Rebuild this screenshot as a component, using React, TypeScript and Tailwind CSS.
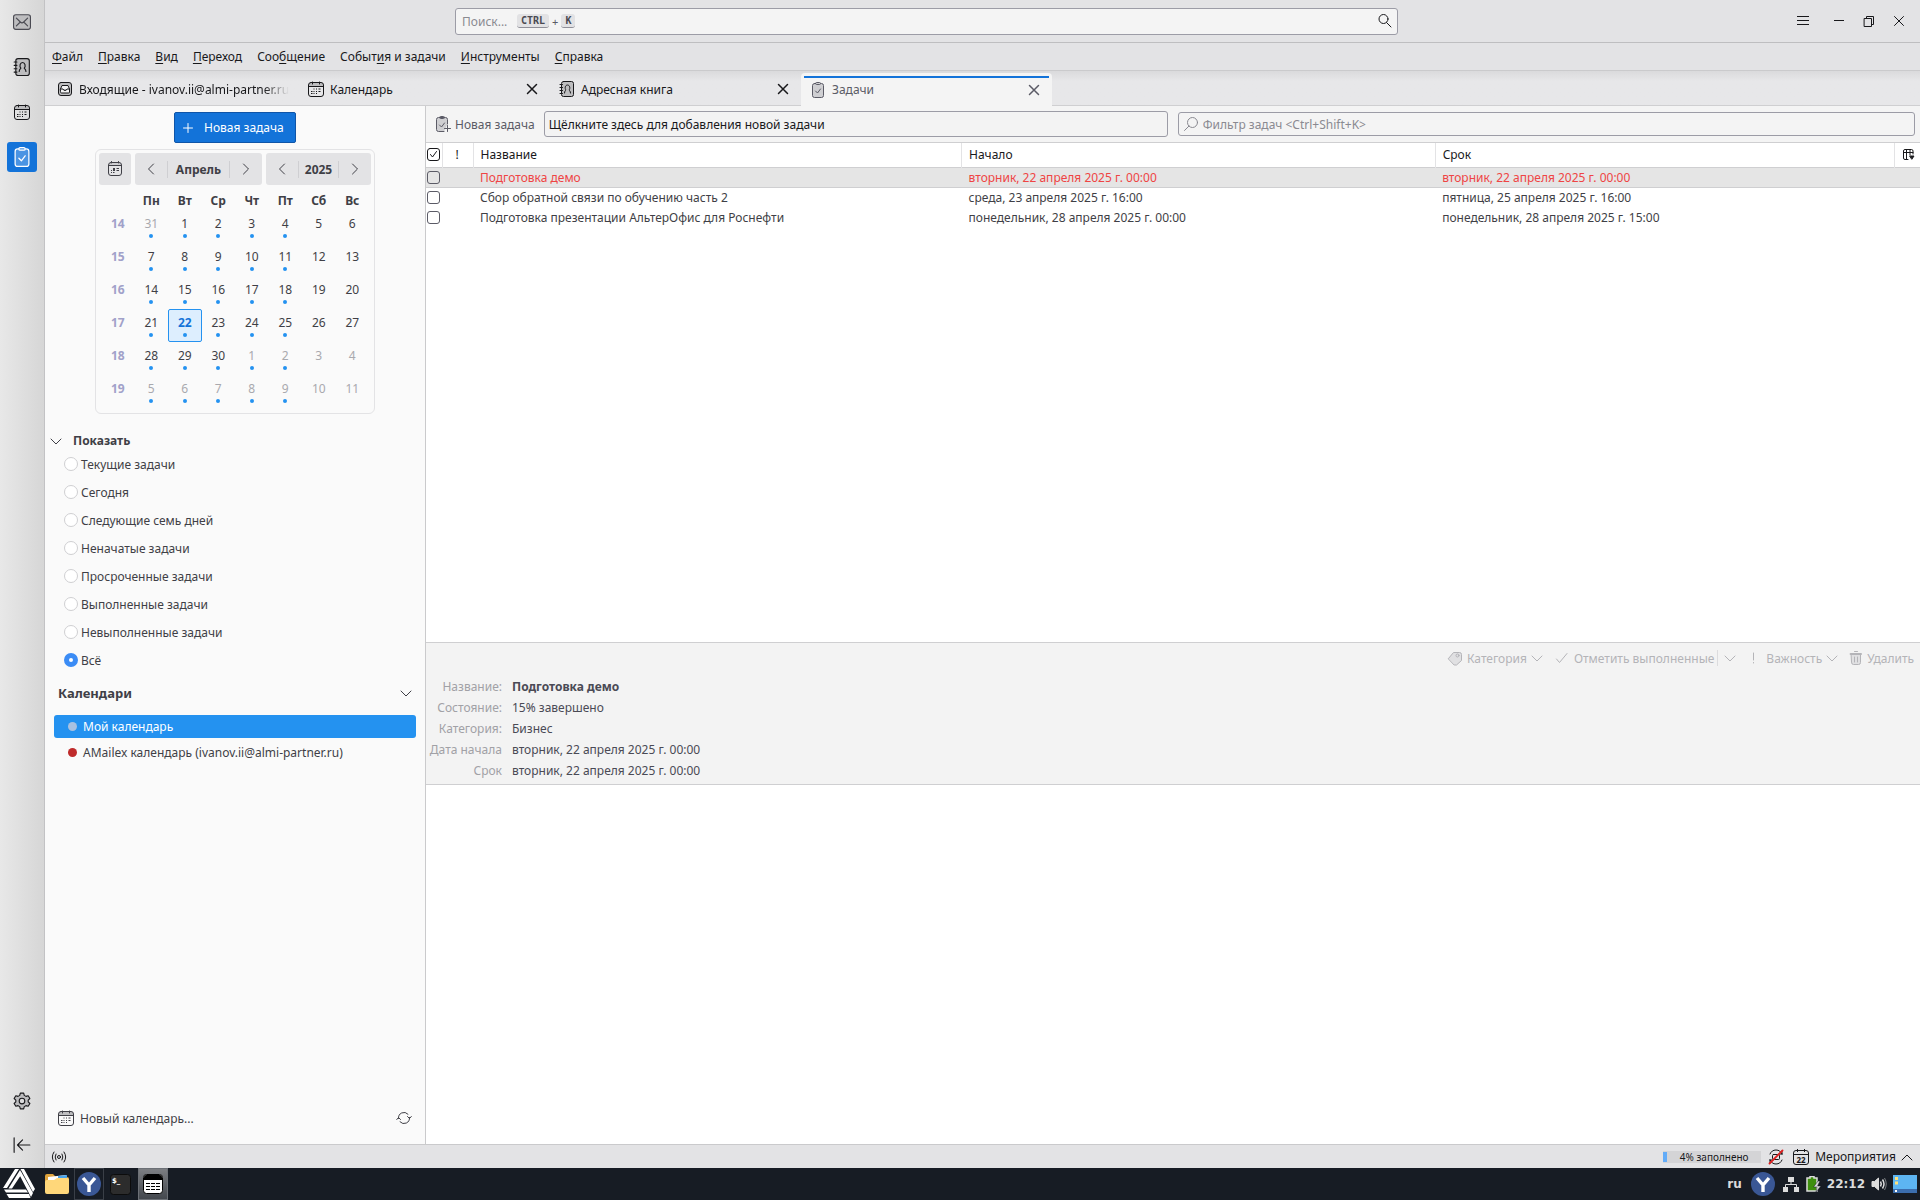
import { useState } from "react";
import type { ReactNode, SVGProps } from "react";

type IconProps = SVGProps<SVGSVGElement>;

function Icon({ children, ...props }: IconProps) {
  return (
    <svg
      width="16"
      height="16"
      viewBox="0 0 16 16"
      fill="none"
      stroke="currentColor"
      strokeLinecap="round"
      strokeLinejoin="round"
      aria-hidden="true"
      {...props}
      className={`shrink-0 ${props.className ?? ""}`}
    >
      {children}
    </svg>
  );
}

const MailIcon = (p: IconProps) => (
  <Icon {...p}>
    <rect x="0.5" y="1.5" width="15" height="13" rx="2" fill="#bdbdbf" />
    <path d="M3 4.5l3.5 3.5L3 11.5M13 4.5L9.5 8l3.5 3.5M6.5 8q1.5 1.4 3 0" />
  </Icon>
);

const BookIcon = (p: IconProps) => (
  <Icon {...p}>
    <rect x="2.5" y="0.5" width="12" height="15" rx="2" fill="#bdbdbf" />
    <path d="M1 3.5h2.5M1 6.5h2.5M1 9.5h2.5M1 12.5h2.5" />
    <path d="M5.5 12c0-2 1.2-2.5 1.5-3-1.5-1.5-.8-5 1.5-5s3 3.5 1.5 5c.3.5 1.5 1 1.5 3" />
  </Icon>
);

const CalendarIcon = (p: IconProps) => (
  <Icon {...p}>
    <path d="M.5 5.5v-2q0-2 2-2h11q2 0 2 2v2z" fill="#bdbdbf" stroke="none" />
    <rect x="0.5" y="1.5" width="15" height="14" rx="2.5" />
    <path d="M.5 5.5h15M4.5 1v2M11.5 1v2" />
    <path d="M5.5 8h1M8 8h1M10.5 8h2M3 10.5h1.5M5.5 10.5h1M8 10.5h1M10.5 10.5h2M3 12.5h1.5M5.5 12.5h1M8 12.5h1" strokeLinecap="butt" />
  </Icon>
);

const TodayIcon = (p: IconProps) => (
  <Icon {...p}>
    <path d="M1.5 4.5v-1q0-2 2-2h9q2 0 2 2v1z" fill="#cfcfd2" stroke="none" />
    <rect x="1.5" y="1.5" width="13" height="13" rx="2.5" />
    <path d="M1.5 4.5h13M4.5 .5v1.5M11.5 .5v1.5" />
    <path d="M9.5 7.5H12M4 9.5h1M9.5 9.5H12M4 11.5h1M6 11.5h1.5" strokeLinecap="butt" />
    <path d="M6 7h2v3H6z" fill="currentColor" stroke="none" />
  </Icon>
);

const TaskIcon = ({ paper = "#cfcfd2", ...p }: IconProps & { paper?: string }) => (
  <Icon {...p}>
    <rect x="2.5" y="1.5" width="11" height="14" rx="2" fill={paper} />
    <path d="M5.5 1.5q0-1 1-1h3q1 0 1 1t-1 1h-3q-1 0-1-1z" fill={paper} />
    <path d="M5.5 9l2 2 3-4" />
  </Icon>
);

const NewTaskIcon = (p: IconProps) => (
  <Icon {...p}>
    <path d="M9 15.5H3.5q-2 0-2-2v-10q0-2 2-2h7q2 0 2 2V8" fill="#cfcfd2" />
    <path d="M4.5 1.5q0-1 1-1h3q1 0 1 1t-1 1h-3q-1 0-1-1zM4.5 9l2 2 3-4M12.5 9.5v6M9.5 12.5h6" />
  </Icon>
);

const InboxIcon = (p: IconProps) => (
  <Icon {...p}>
    <rect x="1.5" y="1.5" width="13" height="13" rx="2.5" fill="#bdbdbf" />
    <path d="M3.5 8l1.5-3.5h6L12.5 8v3q0 1-1 1h-7q-1 0-1-1zM3.5 8H6q.5 1.5 2 1.5T10 8h2.5" fill="#f3f3f4" />
  </Icon>
);

const SearchIcon = (p: IconProps) => (
  <Icon {...p}>
    <circle cx="6.5" cy="6" r="4.5" />
    <path d="M9.5 9.5l4.5 4.5" />
  </Icon>
);

const FilterIcon = (p: IconProps) => (
  <Icon {...p}>
    <circle cx="9.5" cy="6.5" r="5" />
    <path d="M6 10l-4.5 4.5" />
  </Icon>
);

const CloseIcon = (p: IconProps) => (
  <Icon {...p}>
    <path d="M3.5 3.5l9 9M12.5 3.5l-9 9" strokeWidth="1.5" />
  </Icon>
);

const ChevronDown = (p: IconProps) => (
  <Icon {...p}>
    <path d="M3 6l5 5 5-5" />
  </Icon>
);

const ChevronLeft = (p: IconProps) => (
  <Icon {...p}>
    <path d="M10.5 3L5.500 8l5 5" />
  </Icon>
);

const ChevronRight = (p: IconProps) => (
  <Icon {...p}>
    <path d="M5.5 3l5 5-5 5" />
  </Icon>
);

const SyncIcon = (p: IconProps) => (
  <Icon {...p}>
    <path d="M2.5 8.5a5.5 5.5 0 0 1 9.5-4.3M13.5 7.5a5.5 5.5 0 0 1-9.5 4.3M.8 9.5l1.700-2 2 2M11.5 6.5l2 2 1.800-2" />
  </Icon>
);

const YandexIcon = () => (
  <svg width="24" height="24" viewBox="0 0 24 24" aria-hidden="true">
    <circle cx="12" cy="12" r="12" fill="#3a5795" />
    <path d="M6 6l6 7 6-7M12 13v7" fill="none" stroke="#fff" strokeWidth="3.4" strokeLinejoin="round" />
  </svg>
);

const MENU: [string, string, string][] = [
  ["", "Ф", "айл"],
  ["", "П", "равка"],
  ["", "В", "ид"],
  ["", "П", "ереход"],
  ["Соо", "б", "щение"],
  ["Событ", "и", "я и задачи"],
  ["", "И", "нструменты"],
  ["", "С", "правка"],
];

const WEEKDAYS = ["Пн", "Вт", "Ср", "Чт", "Пт", "Сб", "Вс"];

const WEEKS = [
  { week: 14, days: [31, 1, 2, 3, 4, 5, 6] },
  { week: 15, days: [7, 8, 9, 10, 11, 12, 13] },
  { week: 16, days: [14, 15, 16, 17, 18, 19, 20] },
  { week: 17, days: [21, 22, 23, 24, 25, 26, 27] },
  { week: 18, days: [28, 29, 30, 1, 2, 3, 4] },
  { week: 19, days: [5, 6, 7, 8, 9, 10, 11] },
];

const FILTERS = [
  "Текущие задачи",
  "Сегодня",
  "Следующие семь дней",
  "Неначатые задачи",
  "Просроченные задачи",
  "Выполненные задачи",
  "Невыполненные задачи",
  "Всё",
];

const TASKS = [
  {
    title: "Подготовка демо",
    start: "вторник, 22 апреля 2025 г. 00:00",
    due: "вторник, 22 апреля 2025 г. 00:00",
    overdue: true,
  },
  {
    title: "Сбор обратной связи по обучению часть 2",
    start: "среда, 23 апреля 2025 г. 16:00",
    due: "пятница, 25 апреля 2025 г. 16:00",
    overdue: false,
  },
  {
    title: "Подготовка презентации АльтерОфис для Роснефти",
    start: "понедельник, 28 апреля 2025 г. 00:00",
    due: "понедельник, 28 апреля 2025 г. 15:00",
    overdue: false,
  },
];

const DETAILS = [
  ["Название:", "Подготовка демо"],
  ["Состояние:", "15% завершено"],
  ["Категория:", "Бизнес"],
  ["Дата начала", "вторник, 22 апреля 2025 г. 00:00"],
  ["Срок", "вторник, 22 апреля 2025 г. 00:00"],
];

function Rail() {
  return (
    <nav className="flex w-[45px] shrink-0 flex-col items-center border-r border-[#c2c2c4] bg-linear-to-r from-[#e8e8e8] to-[#d6d6d6] pb-[14px] text-[#18181b]">
      <button type="button" aria-label="Почта" className="flex h-11 w-full items-center justify-center text-[#4a4a52]">
        <MailIcon width="18" height="18" />
      </button>
      <button type="button" aria-label="Адресная книга" className="flex h-[45px] w-full items-center justify-center">
        <BookIcon width="18" height="18" />
      </button>
      <button type="button" aria-label="Календарь" className="flex h-[45px] w-full items-center justify-center">
        <CalendarIcon />
      </button>
      <button
        type="button"
        aria-label="Задачи"
        className="mt-2 flex h-[30px] w-[30px] items-center justify-center rounded-[3px] bg-[#1373d9] text-white"
      >
        <TaskIcon width="20" height="20" paper="#4a94e3" />
      </button>
      <div className="flex-1" />
      <button type="button" aria-label="Настройки" className="mb-[26px]">
        <Icon width="18" height="18">
          <path
            d="M6.5 1h3l.5 2 1.5.9 2-.6 1.5 2.5-1.5 1.4v1.6l1.5 1.4-1.5 2.5-2-.6-1.5.9-.5 2h-3l-.5-2-1.5-.9-2 .6L1 10.2l1.500-1.4V7.2L1 5.8l1.500-2.5 2 .6L6 3z"
            fill="#bdbdbf"
          />
          <circle cx="8" cy="8" r="2.5" fill="#dcdcdd" />
        </Icon>
      </button>
      <button type="button" aria-label="Свернуть панель">
        <Icon width="18" height="18">
          <path d="M1 1.500v13M15 8H4M8.500 3.500L4 8l4.500 4.500" />
        </Icon>
      </button>
    </nav>
  );
}

function TitleBar() {
  return (
    <header className="flex h-[43px] shrink-0 items-center border-b border-[#bebec0] pr-[13px] text-[#18181b]">
      <div className="w-[410px]" />
      <label className="flex h-[27px] flex-1 items-center rounded-[3px] border border-[#9c9ca6] bg-[#f4f4f4] pr-1 pl-[6px]">
        <input aria-label="Поиск" placeholder="Поиск..." className="w-[55px] bg-transparent outline-none placeholder:text-[#8a8a91]" />
        <kbd className="rounded-[3px] border-b border-[#8f8f98] bg-[#e2e2e4] px-1 font-['DejaVu_Sans_Mono',monospace] text-[10px] leading-[13px] font-bold text-[#4a4a52]">
          CTRL
        </kbd>
        <span className="px-[3px] text-[11px] text-[#5b5b66]">+</span>
        <kbd className="rounded-[3px] border-b border-[#8f8f98] bg-[#e2e2e4] px-1 font-['DejaVu_Sans_Mono',monospace] text-[10px] leading-[13px] font-bold text-[#4a4a52]">
          K
        </kbd>
        <SearchIcon className="ml-auto" />
      </label>
      <div className="w-[397px]" />
      <div className="flex items-center">
        <button type="button" aria-label="Меню" className="mr-5">
          <Icon strokeLinecap="butt"><path d="M2 3.500h12M2 7.500h12M2 11.500h12" /></Icon>
        </button>
        <button type="button" aria-label="Свернуть" className="mr-[14px]">
          <Icon strokeLinecap="butt"><path d="M3 7.500h10" /></Icon>
        </button>
        <button type="button" aria-label="Восстановить" className="mr-[14px]">
          <Icon strokeLinejoin="miter"><path d="M3.500 5.500h7v8h-7zM5.500 5.500v-2h7v8h-2" /></Icon>
        </button>
        <button type="button" aria-label="Закрыть">
          <Icon><path d="M3.500 3.500l9 9M12.500 3.500l-9 9" /></Icon>
        </button>
      </div>
    </header>
  );
}

function MenuBar() {
  return (
    <nav className="flex h-[28px] shrink-0 items-center gap-px border-b border-[#cacacc] text-[#18181b]">
      {MENU.map(([before, key, after]) => (
        <button key={before + key + after} type="button" className="px-[7px]">
          {before}
          <span className="underline underline-offset-2">{key}</span>
          {after}
        </button>
      ))}
    </nav>
  );
}

function Tab({ icon, label, closable = true, active = false }: { icon: ReactNode; label: string; closable?: boolean; active?: boolean }) {
  if (active) {
    return (
      <div className="z-10 -mb-px w-[251px] rounded-t-[4px] bg-[#f4f4f4] px-[3px] pt-[3px] text-[#5b5b66]">
        <div className="h-[2px] bg-[#1373d9]" />
        <div className="flex h-[23px] items-center gap-[6px] pr-[7px] pl-[6px]">
          {icon}
          <span className="flex-1">{label}</span>
          <button type="button" aria-label="Закрыть вкладку">
            <CloseIcon />
          </button>
        </div>
      </div>
    );
  }
  return (
    <div className="flex w-[251px] items-center gap-[6px] pr-[10px] pl-[9px] text-[#18181b]">
      {icon}
      {closable ? (
        <>
          <span className="flex-1">{label}</span>
          <button type="button" aria-label="Закрыть вкладку">
            <CloseIcon />
          </button>
        </>
      ) : (
        <span className="min-w-0 flex-1 mask-r-from-88% mask-r-to-100% whitespace-nowrap">{label}</span>
      )}
    </div>
  );
}

function TabBar() {
  return (
    <div className="flex h-[35px] shrink-0 border-b border-[#cfcfd1] bg-linear-to-b from-[#dadadc] to-[#e7e7e9] to-30% pt-[2px] pl-[3px]">
      <Tab icon={<InboxIcon />} label="Входящие - ivanov.ii@almi-partner.ru" closable={false} />
      <Tab icon={<CalendarIcon />} label="Календарь" />
      <Tab icon={<BookIcon />} label="Адресная книга" />
      <Tab icon={<TaskIcon />} label="Задачи" active />
    </div>
  );
}

function MiniMonth() {
  return (
    <div className="mx-auto mt-[6px] w-[280px] rounded-[6px] border border-[#e3e3e5] px-[3px] pt-[3px] pb-[5px]">
      <div className="flex h-8 gap-1 font-bold">
        <button type="button" aria-label="Сегодня" className="flex w-8 items-center justify-center rounded-[3px] bg-[#e3e3e5]">
          <TodayIcon />
        </button>
        <div className="flex flex-1 items-center justify-between rounded-[3px] bg-[#e3e3e5] px-2">
          <button type="button" aria-label="Предыдущий месяц"><ChevronLeft /></button>
          <span className="h-[17px] border-x border-[#cfcfd2] px-2 leading-[17px]">Апрель</span>
          <button type="button" aria-label="Следующий месяц"><ChevronRight /></button>
        </div>
        <div className="flex w-[105px] items-center justify-between rounded-[3px] bg-[#e3e3e5] px-2">
          <button type="button" aria-label="Предыдущий год"><ChevronLeft /></button>
          <span className="h-[17px] border-x border-[#cfcfd2] px-[6px] leading-[17px]">2025</span>
          <button type="button" aria-label="Следующий год"><ChevronRight /></button>
        </div>
      </div>
      <table className="mx-auto mt-[2px] w-[268px] table-fixed border-collapse text-center">
        <thead>
          <tr className="h-[23px]">
            <td />
            {WEEKDAYS.map((d) => (
              <th key={d} className="p-0 pt-1 font-bold">{d}</th>
            ))}
          </tr>
        </thead>
        <tbody>
          {WEEKS.map(({ week, days }) => (
            <tr key={week} className="h-[33px] align-top">
              <th className="p-0 pt-1 font-bold text-[#a1a1c9]">{week}</th>
              {days.map((day, i) => {
                const outside = (week === 14 && day > 20) || (week >= 18 && day < 20);
                const today = week === 17 && day === 22;
                return (
                  <td key={i} className="p-0">
                    <button
                      type="button"
                      className={`flex h-[33px] w-full flex-col items-center rounded-[2px] border pt-[3px] ${
                        today ? "border-[#2492f0] bg-[#ddeefe] font-bold text-[#1373d9]" : "border-transparent"
                      } ${outside ? "text-[#a9a9ae]" : ""}`}
                    >
                      {day}
                      {i < 5 && <span className="mt-px h-1 w-1 rounded-full bg-[#2492f0]" />}
                    </button>
                  </td>
                );
              })}
            </tr>
          ))}
        </tbody>
      </table>
    </div>
  );
}

function Sidebar() {
  const [filter, setFilter] = useState("Всё");

  return (
    <aside className="flex w-[381px] shrink-0 flex-col border-r border-[#cacacc] bg-[#fafafa] text-[#3f3f46]">
      <button
        type="button"
        className="mx-auto mt-[6px] flex h-[31px] w-[122px] items-center gap-2 rounded-[2px] border border-[#0f55a8] bg-[#1373d9] pl-[5px] text-white"
      >
        <Icon><path d="M8 3.500v9M3.500 8h9" /></Icon>
        Новая задача
      </button>
      <MiniMonth />

      <button type="button" className="mt-[17px] flex h-[19px] items-center gap-[9px] pl-[3px] font-bold">
        <ChevronDown />
        Показать
      </button>
      <fieldset className="pl-[19px]">
        {FILTERS.map((f) => (
          <label key={f} className="flex h-7 items-center gap-[3px]">
            <input
              type="radio"
              name="task-filter"
              checked={filter === f}
              onChange={() => setFilter(f)}
              className="h-[14px] w-[14px] shrink-0 appearance-none rounded-full border border-[#cfcfd2] bg-white checked:border-[5px] checked:border-[#3b8cf5]"
            />
            {f}
          </label>
        ))}
      </fieldset>

      <div className="mt-[9px] flex h-[20px] items-center justify-between pr-[11px] pl-[13px] text-[13px] font-bold">
        Календари
        <button type="button" aria-label="Свернуть календари"><ChevronDown /></button>
      </div>
      <ul className="mt-[12px] px-[9px]">
        <li className="mb-[3px] flex h-[23px] items-center gap-[6px] rounded-[3px] bg-[#2492f0] pl-[14px] text-white">
          <span className="h-[9px] w-[9px] rounded-full bg-[#a8c1e1]" />
          Мой календарь
        </li>
        <li className="flex h-[23px] items-center gap-[6px] pl-[14px]">
          <span className="h-[9px] w-[9px] rounded-full bg-[#bf2b2b]" />
          AMailex календарь (ivanov.ii@almi-partner.ru)
        </li>
      </ul>

      <div className="mt-auto mb-[16px] flex h-5 items-center justify-between pr-[13px] pl-[13px]">
        <button type="button" className="flex items-center gap-[6px]">
          <CalendarIcon />
          Новый календарь...
        </button>
        <button type="button" aria-label="Синхронизировать"><SyncIcon /></button>
      </div>
    </aside>
  );
}

function TaskTable() {
  return (
    <div className="min-h-0 flex-1 overflow-hidden bg-white">
      <table className="w-full table-fixed border-collapse text-left text-[#3f3f46]">
        <colgroup>
          <col className="w-[16px]" />
          <col className="w-[31px]" />
          <col className="w-[32.7%]" />
          <col className="w-[31.7%]" />
          <col />
          <col className="w-[26px]" />
        </colgroup>
        <thead className="border-b border-[#cfcfd1] text-[#18181b]">
          <tr className="h-6">
            <th className="border-r border-[#e3e3e5] p-0 pl-px">
              <Icon width="13" height="13" viewBox="0 0 13 13">
                <rect x="0.500" y="0.500" width="12" height="12" rx="2.500" />
                <path d="M3.500 6.500l2 2.500 4-5.500" />
              </Icon>
            </th>
            <th className="border-r border-[#e3e3e5] pl-[13px] font-normal">!</th>
            <th className="border-r border-[#e3e3e5] pl-[7px] font-normal">Название</th>
            <th className="border-r border-[#e3e3e5] pl-[7px] font-normal">Начало</th>
            <th className="border-r border-[#e3e3e5] pl-[7px] font-normal">Срок</th>
            <th className="pl-[7px]">
              <button type="button" aria-label="Столбцы" className="block">
                <Icon width="13" height="13" viewBox="0 0 13 13">
                  <path d="M6 11.500H3q-1.500 0-1.500-1.500V3q0-1.500 1.500-1.500h6.500Q11 1.500 11 3v3M1.500 4.500H11M4.500 1.500v10M8 1.500V7" />
                  <path d="M8 8h4l-2 3z" fill="currentColor" />
                </Icon>
              </button>
            </th>
          </tr>
        </thead>
        <tbody>
          {TASKS.map((t) => (
            <tr
              key={t.title}
              className={`h-5 ${t.overdue ? "border-b border-[#cfcfd1] bg-[#e5e5e5] text-[#ef4444]" : ""}`}
            >
              <td className="p-0 pl-px">
                <input
                  type="checkbox"
                  aria-label={t.title}
                  className="block h-[13px] w-[13px] appearance-none rounded-[3px] border border-[#5b5b66] checked:bg-[#1373d9]"
                />
              </td>
              <td className="p-0" />
              <td className="truncate p-0 pl-[7px]">{t.title}</td>
              <td className="truncate p-0 pl-[7px]">{t.start}</td>
              <td className="truncate p-0 pl-[7px]">{t.due}</td>
              <td className="p-0" />
            </tr>
          ))}
        </tbody>
      </table>
    </div>
  );
}

function TaskDetails() {
  return (
    <section className="h-[143px] shrink-0 border-y border-[#cfcfd1] bg-[#f3f3f3]">
      <div className="mt-[5px] flex h-5 items-center justify-end pr-[6px] text-[#b4b4b8]">
        <button type="button" className="flex items-center">
          <Icon className="mr-1">
            <path d="M1.500 8.500l5-6h6q2 0 2 2v6l-5 4.500h-2z" fill="#e0e0e2" />
            <circle cx="10.500" cy="5.500" r="1.500" />
          </Icon>
          Категория
          <ChevronDown className="ml-[2px]" />
        </button>
        <button type="button" className="ml-[9px] flex items-center">
          <Icon className="mr-[4px]"><path d="M2.500 9l3 3.500 7.500-9" /></Icon>
          Отметить выполненные
        </button>
        <button type="button" aria-label="Ещё" className="ml-[3px] border-l border-[#dcdcde] pl-[4px]">
          <ChevronDown />
        </button>
        <button type="button" className="ml-[8px] flex items-center">
          <Icon className="mr-[4px]"><path d="M7.500 3v7M7.500 12.500v.5" /></Icon>
          Важность
          <ChevronDown className="ml-[2px]" />
        </button>
        <button type="button" className="ml-[8px] flex items-center">
          <Icon className="mr-[3px]">
            <path d="M3.500 4.500h9v8q0 2-2 2h-5q-2 0-2-2z" fill="#e0e0e2" />
            <path d="M2.500 3.500h11v1h-11zM6.500 1.500h3M6.500 7v5M9.500 7v5" />
          </Icon>
          Удалить
        </button>
      </div>
      <dl className="mt-[8px] grid grid-cols-[76px_1fr] gap-x-[10px] leading-[21px] text-[#4a4a55]">
        {DETAILS.map(([label, value], i) => (
          <div key={label} className="contents">
            <dt className="text-right whitespace-nowrap text-[#a1a1a6]">{label}</dt>
            <dd className={i === 0 ? "font-bold" : ""}>{value}</dd>
          </div>
        ))}
      </dl>
    </section>
  );
}

function TaskPane() {
  return (
    <main className="flex min-w-0 flex-1 flex-col bg-white">
      <div className="flex h-[37px] shrink-0 items-center border-b border-[#cfcfd1] bg-[#f4f4f4] pr-[5px] pl-[9px]">
        <button type="button" className="flex items-center gap-1 text-[#5b5b66]">
          <NewTaskIcon />
          Новая задача
        </button>
        <input
          aria-label="Новая задача"
          placeholder="Щёлкните здесь для добавления новой задачи"
          className="ml-[9px] h-[26px] min-w-0 flex-[623] rounded-[3px] border border-[#9c9ca6] bg-[#f3f3f3] px-1 outline-none placeholder:text-[#18181b]"
        />
        <label className="ml-[10px] flex h-6 min-w-0 flex-[738] items-center gap-1 rounded-[3px] border border-[#9c9ca6] px-1 text-[#8a8a91]">
          <FilterIcon />
          <input
            aria-label="Фильтр задач"
            placeholder="Фильтр задач <Ctrl+Shift+K>"
            className="min-w-0 flex-1 bg-transparent outline-none placeholder:text-[#8a8a91]"
          />
        </label>
      </div>
      <TaskTable />
      <TaskDetails />
      <div className="h-[359px] shrink-0 bg-white" />
    </main>
  );
}

function StatusBar() {
  return (
    <footer className="flex h-6 shrink-0 items-center border-t border-[#cacacc] pr-[5px] pl-[6px] text-[#18181b]">
      <Icon>
        <circle cx="8" cy="8" r="1.500" />
        <path d="M5 5q-1.800 3 0 6M11 5q1.800 3 0 6M3 3q-3.500 5 0 10M13 3q3.500 5 0 10" />
      </Icon>
      <div className="ml-auto flex h-3 w-[98px] items-center bg-[#d4d4d6]">
        <div className="h-[10px] w-1 bg-[#63acf8]" />
        <span className="flex-1 text-center text-[10px] leading-3">4% заполнено</span>
      </div>
      <Icon className="ml-[7px]">
        <path d="M2 5a6.500 6.500 0 0 1 12 0M14 11A6.500 6.500 0 0 1 2 11M2 11v3M2 11h3M14 5V2M14 5h-3" />
        <rect x="4.500" y="5.500" width="7" height="5" rx="1" />
        <path d="M1.500 14.500l13-13" stroke="#e02020" strokeWidth="1.800" />
      </Icon>
      <button type="button" className="ml-[9px] flex items-center">
        <svg width="16" height="16" viewBox="0 0 16 16" fill="none" stroke="currentColor" className="mr-[6px]" aria-hidden="true">
          <rect x="0.500" y="1.500" width="15" height="14" rx="2.500" />
          <path d="M.5 5.500h15M4.500 0v3M11.500 0v3" />
          <text x="8" y="14" textAnchor="middle" fontSize="8" fontWeight="bold" fill="currentColor" stroke="none">22</text>
        </svg>
        Мероприятия
        <Icon className="ml-[3px]"><path d="M3 11l5-5 5 5" /></Icon>
      </button>
    </footer>
  );
}

function Taskbar() {
  return (
    <div className="flex h-8 shrink-0 items-center bg-[#171c24] pr-[3px] pl-[3px] font-['DejaVu_Sans',sans-serif] text-[#dcdcdc]">
      <button type="button" aria-label="Меню приложений" className="mr-[10px]">
        <svg width="32" height="30" viewBox="0 0 32 30" fill="#fff" aria-hidden="true">
          <path d="M12 0h4L4 19H0zM17 1l2 3.500L9 19.500H5.500z" />
          <path d="M17.500 0H21l11 20-2 3zM16.500 6l2-2.500L30 24l-2 4z" />
          <path d="M1 20.500h22l2 3H3zM3.500 25H26l1.500 4H6z" />
        </svg>
      </button>
      <button type="button" aria-label="Файлы">
        <svg width="24" height="22" viewBox="0 0 24 22" aria-hidden="true">
          <path d="M0 3q0-2 2-2h6l3 3h11q2 0 2 2v4H0z" fill="#e0a33c" />
          <path d="M3 4l18-2v6H3z" fill="#fff" />
          <path d="M13 3l9-1v4h-9z" fill="#4aa3e8" />
          <path d="M0 9q0-2 2-2h7l3-2h10q2 0 2 2v12q0 2-2 2H2q-2 0-2-2z" fill="#ffd77a" />
        </svg>
      </button>
      <button type="button" aria-label="Браузер" className="ml-[5px] flex h-8 w-[30px] items-center justify-center border border-[#3a3f47]">
        <YandexIcon />
      </button>
      <button type="button" aria-label="Терминал" className="ml-[6px]">
        <svg width="21" height="21" viewBox="0 0 21 21" fill="none" aria-hidden="true">
          <rect x="0.500" y="0.500" width="20" height="20" rx="3" fill="#2c2c2c" stroke="#0c0c0c" />
          <text x="2" y="9" fontSize="7" fontWeight="bold" fill="#fff">$_</text>
        </svg>
      </button>
      <button type="button" aria-label="Календарь" className="ml-[7px] flex h-8 w-[30px] items-center justify-center border border-[#6c7076] bg-linear-to-b from-[#7c7e82] to-[#44484e]">
        <svg width="20" height="20" viewBox="0 0 20 20" aria-hidden="true">
          <rect x="0.500" y="0.500" width="19" height="19" rx="3" fill="#fff" stroke="#000" />
          <path d="M1 6V3.500Q1 1 3.500 1h13Q19 1 19 3.500V6z" fill="#000" />
          <path d="M3 9.500h4M8 9.500h4M13 9.500h4M3 12.500h4M8 12.500h4M13 12.500h4M3 15.500h4M8 15.500h4M13 15.500h4" stroke="#000" />
        </svg>
      </button>

      <div className="ml-auto flex items-center text-xs font-bold">
        <span className="mr-[9px]">ru</span>
        <YandexIcon />
        <svg width="16" height="16" viewBox="0 0 16 16" fill="currentColor" className="ml-2" aria-hidden="true">
          <path d="M5 1h6v5H5zM0 11h5v5H0zM11 11h5v5h-5z" />
          <path d="M8 6v3M2.500 11V8.500h11V11" fill="none" stroke="currentColor" />
        </svg>
        <svg width="16" height="16" viewBox="0 0 16 16" fill="none" className="ml-[7px]" aria-hidden="true">
          <path d="M4 .5h4V2h3v13H1V2h3z" fill="#3e8f0f" stroke="#dcdcdc" strokeWidth="1.500" />
          <path d="M12 5L7.500 11H11l-1 5 5-6h-3.500L14 5z" fill="#dcdcdc" stroke="#171c24" strokeWidth="0.500" />
        </svg>
        <span className="ml-[5px]">22:12</span>
        <svg width="16" height="16" viewBox="0 0 16 16" fill="none" stroke="currentColor" className="ml-[6px]" aria-hidden="true">
          <path d="M1 5.500h2.500L7.500 2v12l-4-3.500H1z" fill="currentColor" />
          <path d="M9.500 5.500q1.500 2.500 0 5M11.500 3.500q3 4.500 0 9" strokeWidth="1.500" />
          <path d="M13.500 2q3.500 6 0 12" opacity="0.500" />
        </svg>
        <svg width="24" height="18" viewBox="0 0 24 18" className="ml-[6px]" aria-hidden="true">
          <path d="M0 0h24v18H0z" fill="#5db5f2" />
          <path d="M0 14h24v4H0z" fill="#3c6eae" />
          <path d="M2 2h3v3H2zM2 6.500h3v3H2z" fill="#ffe27a" />
          <path d="M2 15h2v2H2z" fill="#fff" />
        </svg>
      </div>
    </div>
  );
}

export default function App() {
  return (
    <div className="flex h-screen flex-col bg-[#e3e3e5] font-['Noto_Sans',sans-serif] text-xs leading-[19px]">
      <div className="flex min-h-0 flex-1">
        <Rail />
        <div className="flex min-w-0 flex-1 flex-col">
          <TitleBar />
          <MenuBar />
          <TabBar />
          <div className="flex min-h-0 flex-1">
            <Sidebar />
            <TaskPane />
          </div>
          <StatusBar />
        </div>
      </div>
      <Taskbar />
    </div>
  );
}
